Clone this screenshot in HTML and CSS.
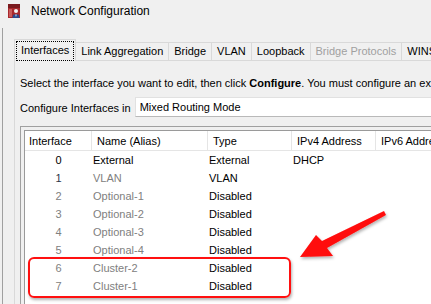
FILE: index.html
```html
<!DOCTYPE html>
<html>
<head>
<meta charset="utf-8">
<title>Network Configuration</title>
<link rel="stylesheet" href="styles.css">
</head>
<body>
<div class="titlebar">
  <svg class="appicon" width="12" height="14" viewBox="0 0 12 14">
    <rect x="0" y="0" width="12" height="14" fill="#a8282c"/>
    <rect x="0" y="0" width="12" height="4" fill="#7a1a1e"/>
    <rect x="1" y="5" width="3" height="8" fill="#c85a5a"/>
    <circle cx="8" cy="7" r="2" fill="#f4f4f4"/>
    <path d="M4.5 14 L5 11 Q8 9.5 11 11 L11.5 14 Z" fill="#2c4a8c"/>
    <path d="M7.3 10.4 L8 13 L8.7 10.4 Z" fill="#ffffff"/>
  </svg>
  <span class="title">Network Configuration</span>
</div>
<div class="frame">
  <div class="tabs">
    <div class="tab selected"><span class="focus">Interfaces</span></div>
    <div class="tab">Link Aggregation</div>
    <div class="tab">Bridge</div>
    <div class="tab">VLAN</div>
    <div class="tab">Loopback</div>
    <div class="tab disabled">Bridge Protocols</div>
    <div class="tab">WINS/DNS</div>
  </div>
  <div class="panel">
    <p class="intro">Select the interface you want to edit, then click <b>Configure</b>. You must configure an external interface.</p>
    <div class="config-row">
      <span class="config-label">Configure Interfaces in</span>
      <div class="dropdown">Mixed Routing Mode</div>
    </div>
    <div class="table-frame">
      <div class="grid">
        <div class="th c1">Interface</div>
        <div class="th">Name (Alias)</div>
        <div class="th">Type</div>
        <div class="th">IPv4 Address</div>
        <div class="th">IPv6 Address</div>

        <div class="td num dark">0</div><div class="td">External</div><div class="td">External</div><div class="td">DHCP</div><div class="td"></div>
        <div class="td num navy">1</div><div class="td gray">VLAN</div><div class="td">VLAN</div><div class="td"></div><div class="td"></div>
        <div class="td num gray">2</div><div class="td gray">Optional-1</div><div class="td">Disabled</div><div class="td"></div><div class="td"></div>
        <div class="td num gray">3</div><div class="td gray">Optional-2</div><div class="td">Disabled</div><div class="td"></div><div class="td"></div>
        <div class="td num gray">4</div><div class="td gray">Optional-3</div><div class="td">Disabled</div><div class="td"></div><div class="td"></div>
        <div class="td num gray">5</div><div class="td gray">Optional-4</div><div class="td">Disabled</div><div class="td"></div><div class="td"></div>
        <div class="td num gray">6</div><div class="td gray">Cluster-2</div><div class="td">Disabled</div><div class="td"></div><div class="td"></div>
        <div class="td num gray">7</div><div class="td gray">Cluster-1</div><div class="td">Disabled</div><div class="td"></div><div class="td"></div>
      </div>
    </div>
  </div>
</div>
<div class="highlight"></div>
<svg class="arrow" width="431" height="304" viewBox="0 0 431 304">
  <defs>
    <filter id="sh" x="-20%" y="-20%" width="140%" height="140%">
      <feDropShadow dx="1" dy="2" stdDeviation="1.5" flood-color="#000" flood-opacity="0.3"/>
    </filter>
  </defs>
  <polygon points="300,257 316,235 322,241 384,211 386,215 327,248 333,256" fill="#ff0a0a" filter="url(#sh)"/>
</svg>
</body>
</html>
```
FILE: styles.css
```css
* { box-sizing: border-box; margin: 0; padding: 0; }
html, body { width: 431px; height: 304px; overflow: hidden; }
body {
  background: #f0f0f0;
  font-family: "Liberation Sans", Arial, sans-serif;
  font-size: 11px;
  color: #000;
  position: relative;
}
.titlebar {
  height: 28px;
  display: flex;
  align-items: flex-start;
  padding: 4px 0 0 8px;
  gap: 11px;
}
.appicon { display: block; }
.title { font-size: 12px; line-height: 14px; color: #000; }

.frame {
  margin-left: 2px;
  border-left: 1px solid #a0a0a0;
  padding: 11px 0 0 11px;
  height: 276px;
  width: 700px;
}
.tabs {
  display: flex;
  align-items: flex-end;
  height: 21px;
  white-space: nowrap;
  position: relative;
  z-index: 1;
}
.tab {
  height: 18px;
  border: 1px solid #d9d9d9;
  border-bottom: none;
  padding: 0 5px;
  line-height: 16px;
  margin-left: -1px;
  background: #f0f0f0;
  color: #000;
}
.tab.disabled { color: #a0a0a0; }
.tab.selected {
  height: 22px;
  margin-left: 0;
  margin-bottom: -1px;
  padding: 1px;
  background: #f0f0f0;
  position: relative;
  z-index: 2;
}
.focus {
  display: block;
  border: 1px dotted #000;
  padding: 0 4px 1px;
  line-height: 17px;
}
.panel {
  border: 1px solid #d9d9d9;
  border-right: none;
  height: 260px;
  padding: 15px 0 0 5px;
  background: #f0f0f0;
}
.intro { line-height: 14px; white-space: nowrap; }
.intro b { font-weight: bold; }
.config-row {
  display: flex;
  align-items: center;
  gap: 4px;
  margin-top: 7px;
  height: 20px;
}
.config-label { line-height: 14px; padding-top: 1px; white-space: nowrap; }
.dropdown {
  flex: 1;
  height: 20px;
  background: #fff;
  border: 1px solid #e1e1e1;
  border-bottom-color: #b9b9b9;
  padding: 1px 0 0 4px;
  line-height: 17px;
  white-space: nowrap;
}
.table-frame {
  margin-top: 9px;
  border: 1px solid #a0a0a0;
  padding: 3px;
  background: #f0f0f0;
  height: 200px;
}
.grid {
  border: 1px solid #9a9a9a;
  background: #fff;
  height: 100%;
  display: grid;
  grid-template-columns: 67px 116px 84px 84px 1fr;
  grid-auto-rows: 18px;
  grid-template-rows: 20px;
  align-content: start;
}
.th {
  height: 20px;
  border-right: 1px solid #e5e5e5;
  border-bottom: 1px solid #e5e5e5;
  padding: 2px 0 0 5px;
  line-height: 17px;
  white-space: nowrap;
  color: #000;
}
.th.c1 { padding-left: 4px; }
.td {
  line-height: 18px;
  padding-left: 1px;
  white-space: nowrap;
  color: #000;
}
.td.num { text-align: center; padding-left: 0; }
.dark { color: #000; }
.navy { color: #2b3548; }
.gray { color: #808080; }

.highlight {
  position: absolute;
  left: 28px;
  top: 257px;
  width: 263px;
  height: 41px;
  border: 2px solid #ff1010;
  border-radius: 6px;
  box-shadow: 1px 2px 3px rgba(0,0,0,0.3);
}
.arrow {
  position: absolute;
  left: 0;
  top: 0;
  pointer-events: none;
}
```
